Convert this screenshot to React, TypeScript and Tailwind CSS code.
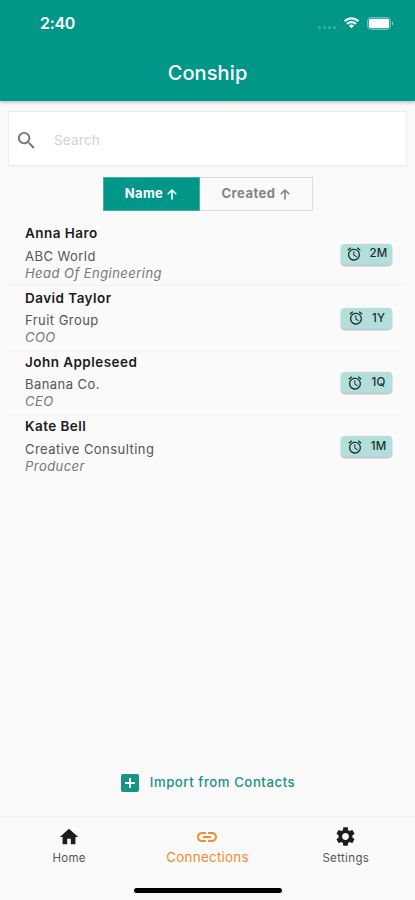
import { MdAddBox, MdAlarm, MdHome, MdLink, MdSearch, MdSettings } from 'react-icons/md';

const contacts = [
  { name: 'Anna Haro', company: 'ABC World', title: 'Head Of Engineering', every: '2M' },
  { name: 'David Taylor', company: 'Fruit Group', title: 'COO', every: '1Y' },
  { name: 'John Appleseed', company: 'Banana Co.', title: 'CEO', every: '1Q' },
  { name: 'Kate Bell', company: 'Creative Consulting', title: 'Producer', every: '1M' },
];

function StatusBar() {
  return (
    <div className="flex h-[46px] items-center pl-10 pr-[21px]">
      <span className="text-[16px] font-semibold tracking-[-0.3px]">2:40</span>
      <div className="ml-auto flex items-center">
        <div className="mr-[7px] mt-[8px] flex gap-[2px] opacity-25">
          <i className="size-[3px] rounded-full bg-white" />
          <i className="size-[3px] rounded-full bg-white" />
          <i className="size-[3px] rounded-full bg-white" />
          <i className="size-[3px] rounded-full bg-white" />
        </div>
        <svg className="mr-[7px] h-[12px] w-[17px]" viewBox="0 0 17 12" fill="white">
          <path d="M8.5 2.4c2.3 0 4.4.9 6 2.4.1.1.3.1.4 0l1.2-1.2c.1-.1.1-.3 0-.4a11 11 0 0 0-15.2 0c-.1.1-.1.3 0 .4l1.2 1.2c.1.1.3.1.4 0a8.7 8.7 0 0 1 6-2.4z" />
          <path d="M8.5 6.3c1.3 0 2.5.5 3.4 1.3.1.1.3.1.4 0l1.2-1.2c.1-.1.1-.3 0-.4a7.3 7.3 0 0 0-10 0c-.1.1-.1.3 0 .4l1.2 1.2c.1.1.3.1.4 0 .9-.8 2.1-1.3 3.4-1.3z" />
          <path d="M10.9 8.9c.1-.1.1-.3 0-.4a3.7 3.7 0 0 0-4.8 0c-.1.1-.1.3 0 .4l2.2 2.2c.1.1.3.1.4 0z" />
        </svg>
        <svg className="h-[13px] w-[27px]" viewBox="0 0 27 13">
          <rect x="0.5" y="0.5" width="23" height="12" rx="3.5" fill="none" stroke="white" strokeOpacity="0.4" />
          <rect x="1.8" y="1.8" width="20.4" height="9.4" rx="2" fill="white" />
          <path d="M25 4.3c1.7.7 1.7 3.7 0 4.4z" fill="white" fillOpacity="0.5" />
        </svg>
      </div>
    </div>
  );
}

function SortArrow() {
  return (
    <svg
      className="ml-[4px] h-[11px] w-[10px]"
      viewBox="0 0 10 11"
      fill="none"
      stroke="currentColor"
      strokeWidth="1.6"
      strokeLinecap="round"
      strokeLinejoin="round"
    >
      <path d="M5 10V1M1.200 4.800L5 1l3.800 3.800" />
    </svg>
  );
}

function SortToggle() {
  return (
    <div className="mx-auto mt-[11px] flex h-[34px] w-[210px] border border-[#dcdcdc] text-[13px] font-bold">
      <button className="-my-px -ml-px flex w-[97px] items-center justify-center border border-[#4aaea4] bg-[#009688] tracking-[0.3px] text-white">
        Name
        <SortArrow />
      </button>
      <button className="flex flex-1 items-center justify-center tracking-[0.5px] text-[#858585]">
        Created
        <SortArrow />
      </button>
    </div>
  );
}

export default function App() {
  return (
    <div className="flex h-[900px] w-[415px] flex-col overflow-hidden bg-[#fafafa] font-['Inter',sans-serif]">
      <header className="h-[101px] shrink-0 bg-[#009688] text-white shadow-[0_1px_4px_rgba(0,0,0,0.3)]">
        <StatusBar />
        <h1 className="text-center text-[20px] font-medium leading-[54px] tracking-[0.1px]">Conship</h1>
      </header>

      <main className="flex flex-1 flex-col">
        <label className="mx-2 mt-[10px] flex h-[55px] items-center border border-[#ececec] bg-white pl-[6px] pt-[4px] shadow-[0_1px_1px_rgba(0,0,0,0.03)]">
          <MdSearch size={23} className="text-[#757575]" />
          <input
            className="ml-4 w-[300px] text-[13.5px] tracking-[0.2px] outline-none placeholder:text-[#d2d2d2]"
            placeholder="Search"
          />
        </label>

        <SortToggle />

        <ul className="mx-2 mt-[11px]">
          {contacts.map((c) => (
            <li key={c.name} className="flex h-[64.3px] items-start border-b border-[#f3f3f3] pl-[17px] pr-[15px] last:border-b-0">
              <div className="pt-[2.4px]">
                <p className="text-[13.5px] font-semibold leading-[18px] tracking-[0.45px] text-[#1c1c1c]">{c.name}</p>
                <p className="mt-[5.5px] text-[13px] leading-[17px] tracking-[0.45px] text-[#555]">{c.company}</p>
                <p className="text-[13px] italic leading-[17px] tracking-[0.45px] text-[#777]">{c.title}</p>
              </div>
              <div className="ml-auto mt-[21.6px] flex h-[21px] w-[51px] items-center justify-center gap-[8px] rounded-[4px] bg-[#b2dfdb] text-[#1f2f2e] shadow-[0_1px_2px_rgba(0,0,0,0.3)]">
                <MdAlarm size={16} />
                <span className="text-[11.5px] font-medium tracking-[0.2px]">{c.every}</span>
              </div>
            </li>
          ))}
        </ul>

        <button className="mb-[21px] mt-auto flex items-center justify-center pr-[2px] text-[#169485]">
          <MdAddBox size={24} />
          <span className="ml-[8px] text-[13.2px] font-medium tracking-[0.55px]">Import from Contacts</span>
        </button>
      </main>

      <nav className="h-[84px] shrink-0 border-t border-[#f0f0f0]">
        <div className="grid h-[68px] grid-cols-3">
          <a className="flex flex-col items-center pt-[9px] text-[#1c1c1c]">
            <MdHome size={22} />
            <span className="mt-[2px] text-[11.5px] leading-[16px] tracking-[0.3px] text-[#555]">Home</span>
          </a>
          <a className="flex flex-col items-center pt-[8px] text-[#f68a2e]">
            <MdLink size={24} />
            <span className="text-[13.5px] leading-[16px] tracking-[0.2px]">Connections</span>
          </a>
          <a className="flex flex-col items-center pt-[8px] text-[#1c1c1c]">
            <MdSettings size={23} />
            <span className="mt-[2px] text-[11.5px] leading-[16px] tracking-[0.35px] text-[#555]">Settings</span>
          </a>
        </div>
        <div className="mx-auto mt-[3px] h-[5px] w-[148px] rounded-full bg-black" />
      </nav>
    </div>
  );
}
